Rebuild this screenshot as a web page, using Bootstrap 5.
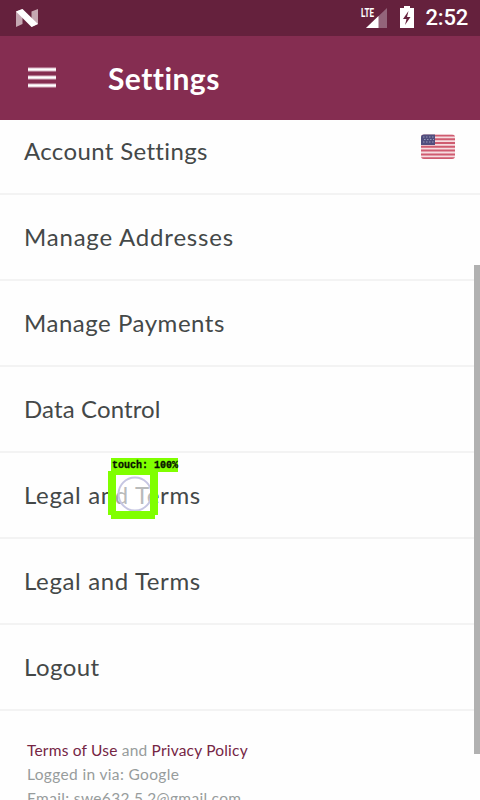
<!DOCTYPE html>
<html lang="en">
<head>
<meta charset="utf-8">
<meta name="viewport" content="width=device-width, initial-scale=1">
<title>Settings</title>
<link href="https://cdn.jsdelivr.net/npm/bootstrap@5.3.0/dist/css/bootstrap.min.css" rel="stylesheet">
<style>
body{font-family:Lato,"Open Sans",sans-serif;background:#fefefe;height:800px;color:#444848}
.status-bar{height:36px;background:#65213d;font-family:Roboto,sans-serif}
.clock{font-size:22px;font-weight:500;line-height:36px;letter-spacing:-.2px;padding-right:12px}
.app-bar{height:84px;background:#852d51;padding-left:28px}
.app-title{font-size:30px;font-weight:700;line-height:36px;margin-left:52px;letter-spacing:.45px}
.settings-row{height:86px;padding:0 25px 0 24px;font-size:24px;line-height:30px;border-bottom:2px solid #f3f3f3;letter-spacing:.45px}
.settings-row:first-child{height:75px;padding-bottom:11px}
.label-account{letter-spacing:.35px}
.label-addresses{letter-spacing:.8px}
.label-payments{letter-spacing:.53px}
.label-data{letter-spacing:.12px}
.label-legal{letter-spacing:.64px}
.flag{margin-top:-9px}
.legal{padding:27px 27px 0;font-size:15.5px;line-height:24px;letter-spacing:.2px;color:#979c9c}
.legal a{color:#752544}
.legal .account-line{letter-spacing:.35px}
.scroll-thumb{right:0;top:265px;width:6px;height:489px;background:#b1b1b1}
.touch-mark{left:108px;top:458px}
</style>
</head>
<body class="overflow-hidden position-relative d-flex flex-column">
<header class="text-white flex-shrink-0">
  <div class="status-bar d-flex align-items-center justify-content-between">
    <svg width="60" height="36" aria-hidden="true"><path d="M16 11.500L22.500 9V24L16 27z M31.500 11.500L38 9V24L31.500 27z" fill="#c5a7b2"/><path d="M16 11.500L22.500 9L38 24L31.500 27z" fill="#fff"/></svg>
    <div class="d-flex align-items-center">
      <svg width="66" height="36" viewBox="360 0 66 36" aria-hidden="true"><path d="M388 8V28H367z" fill="#93647a"/><path d="M379.500 16V28H367z" fill="#fff"/><path d="M361 7H375.500V17H361z" fill="#65213d"/><text x="362" y="16.500" font-size="12" font-weight="700" fill="#fff" textLength="13" lengthAdjust="spacingAndGlyphs">LTE</text><path d="M401 8H405V6H411V8H415V28H401z" fill="#fff"/><path d="M409.500 11L404 19H407.500L406 25L411.500 17H408z" fill="#65213d"/></svg>
      <span class="clock" id="clock">2:52</span>
    </div>
  </div>
  <nav class="app-bar d-flex align-items-center">
    <svg width="28" height="22" aria-label="Menu"><path d="M0 2.500H28M0 10.500H28M0 18.500H28" stroke="#d9b4c5" stroke-width="4"/><path d="M0 2.500H28M0 10.500H28M0 18.500H28" stroke="#fff" stroke-width="2"/></svg>
    <h1 class="app-title mb-0">Settings</h1>
  </nav>
</header>
<main>
  <div>
    <div class="settings-row d-flex align-items-center justify-content-between"><span class="label-account">Account Settings</span>
      <svg class="flag" width="34" height="26" viewBox="0 0 34 26" aria-label="United States"><clipPath id="r"><rect y=".5" width="34" height="24.500" rx="3"/></clipPath><g clip-path="url(#r)"><path fill="#f6dce0" d="M0 0H34V26H0z"/><path d="M0 1.500H34M0 5.200H34M0 9H34M0 12.800H34M0 16.600H34M0 20.400H34M0 24.200H34" stroke="#cf5c70" stroke-width="2"/><path fill="#504e7e" d="M0 0H14V11H0z"/><path d="M2 3H13M3 5.500H13M2 8H13" stroke="#9796b6" stroke-width="1.200" stroke-dasharray="1.500 1.500"/></g></svg>
    </div>
    <div class="settings-row d-flex align-items-center"><span class="label-addresses">Manage Addresses</span></div>
    <div class="settings-row d-flex align-items-center"><span class="label-payments">Manage Payments</span></div>
    <div class="settings-row d-flex align-items-center"><span class="label-data">Data Control</span></div>
    <div class="settings-row d-flex align-items-center"><span class="label-legal">Legal and Terms</span></div>
    <div class="settings-row d-flex align-items-center"><span class="label-legal">Legal and Terms</span></div>
    <div class="settings-row d-flex align-items-center"><span>Logout</span></div>
  </div>
  <footer class="legal">
    <div><a class="text-decoration-none" href="#">Terms of Use</a> and <a class="text-decoration-none" href="#">Privacy Policy</a></div>
    <div class="account-line">Logged in via: Google</div>
    <div class="account-line">Email: swe632.5.2@gmail.com</div>
  </footer>
</main>
<div class="scroll-thumb position-absolute"></div>
<svg class="touch-mark position-absolute" width="72" height="62" viewBox="108 458 72 62" aria-hidden="true"><path d="M116 475H151V511H116z" fill="#fff" opacity=".5"/><circle cx="135" cy="494" r="16.500" fill="#fff" fill-opacity=".25" stroke="#c6c6e2" stroke-width="2"/><path fill="#80ff00" fill-rule="evenodd" d="M111 458H178V472H158V515H155V519H111V515H108V471H111z M116 475V511H150V475z"/><text x="112" y="468" font-family="Liberation Mono,monospace" font-size="10" font-weight="700" textLength="66" lengthAdjust="spacingAndGlyphs" fill="#071000" stroke="#071000" stroke-width=".3">touch: 100%</text></svg>
<script src="https://cdn.jsdelivr.net/npm/bootstrap@5.3.0/dist/js/bootstrap.bundle.min.js"></script>
</body>
</html>
